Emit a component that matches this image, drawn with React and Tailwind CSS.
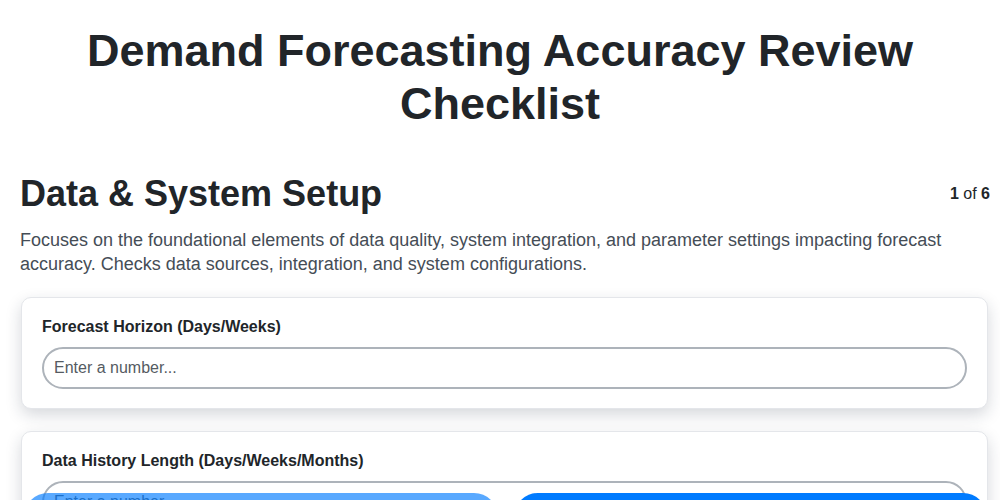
import { useState } from "react";

const questions = [
  { id: "horizon", label: "Forecast Horizon (Days/Weeks)" },
  { id: "history", label: "Data History Length (Days/Weeks/Months)" },
  { id: "sources", label: "Number of Data Sources Integrated" },
];

function QuestionCard({ label, value, onChange }) {
  return (
    <div className="bg-white rounded-[10px] border border-[#e4e6ea] shadow-[0_6px_16px_rgba(30,40,60,0.18)] px-5 pt-[19px] pb-[19px]">
      <label className="block text-base leading-5 font-bold text-[#212529] mb-[10px]">{label}</label>
      <input
        type="number"
        value={value}
        onChange={(e) => onChange(e.target.value)}
        placeholder="Enter a number..."
        className="w-full h-[42px] rounded-full border-2 border-[#adb3ba] px-[10px] text-base text-[#212529] placeholder:text-[#555b62] outline-none"
      />
    </div>
  );
}

export default function App() {
  const [answers, setAnswers] = useState({});

  return (
    <div className="min-h-screen bg-white text-[#212529] font-['Liberation_Sans',Arial,sans-serif]">
      <h1 className="pt-6 px-20 text-center text-[45px] leading-[53px] font-bold">
        Demand Forecasting Accuracy Review Checklist
      </h1>

      <div className="pl-5 pr-[10px] pt-[44px] pb-24">
        <div className="flex items-center justify-between">
          <h2 className="text-4xl leading-10 font-bold">Data &amp; System Setup</h2>
          <p className="text-base">
            <span className="font-bold">1</span> of <span className="font-bold">6</span>
          </p>
        </div>
        <p className="mt-[14px] text-lg leading-6 text-[#454d56]">
          Focuses on the foundational elements of data quality, system integration, and parameter settings impacting forecast accuracy. Checks data sources, integration, and system configurations.
        </p>

        <div className="mt-[21px] flex flex-col gap-[22px] pl-px pr-[2px]">
          {questions.map((q) => (
            <QuestionCard
              key={q.id}
              label={q.label}
              value={answers[q.id] || ""}
              onChange={(v) => setAnswers({ ...answers, [q.id]: v })}
            />
          ))}
        </div>
      </div>

      <div className="fixed top-[493px] left-6 right-[13px] flex gap-4">
        <button disabled className="flex-1 h-12 rounded-[24px] bg-[#007bff] opacity-[0.65] text-white font-bold">
          Previous
        </button>
        <button className="flex-1 h-12 rounded-[24px] bg-[#007bff] text-white font-bold">
          Next
        </button>
      </div>
    </div>
  );
}
